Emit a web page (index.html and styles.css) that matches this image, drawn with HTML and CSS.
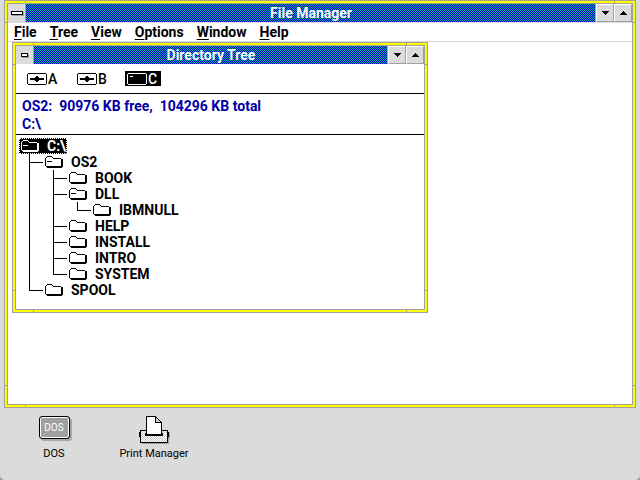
FILE: index.html
```html
<!DOCTYPE html>
<html lang="en">
<head>
<meta charset="utf-8">
<title>File Manager</title>
<link rel="stylesheet" href="styles.css">
</head>
<body>
<svg class="defs" aria-hidden="true">
  <symbol id="folder" viewBox="0 0 18 12">
    <path class="ink" d="M2 0h5v1H2zM1 1h1v1H1zM7 1h1v1H7zM0 2h1v8H0zM8 2h8v1H8zM16 3h2v8h-2zM1 10h16v2H2v-1H1z"/>
  </symbol>
  <symbol id="folder-open" viewBox="0 0 18 12">
    <use href="#folder"/>
    <path class="ink" d="M2 5h5v1H2z"/>
  </symbol>
  <symbol id="floppy" viewBox="0 0 20 12">
    <path class="ink" d="M1 0h18v1H1zM0 1h1v10H0zM19 1h1v10h-1zM1 11h18v1H1zM3 5h14v2H3zM8 4h4v4H8zM9 3h2v6H9z"/>
  </symbol>
  <symbol id="hard-disk" viewBox="0 0 20 12">
    <path class="ink" d="M1 0h18v1H1zM0 1h1v10H0zM19 1h1v10h-1zM1 11h18v1H1zM3 3h3v1H3z"/>
  </symbol>
  <symbol id="arrow-down" viewBox="0 0 7 4">
    <path class="ink" d="M0 0h7v1H0zM1 1h5v1H1zM2 2h3v1H2zM3 3h1v1H3z"/>
  </symbol>
  <symbol id="arrow-up" viewBox="0 0 7 4">
    <path class="ink" d="M3 0h1v1H3zM2 1h3v1H2zM1 2h5v1H1zM0 3h7v1H0z"/>
  </symbol>
</svg>

<main class="window main-window">
  <div class="pane">
    <header class="titlebar">
      <button class="system" aria-label="System menu"><span class="bar"></span></button>
      <h1 class="title">File Manager</h1>
      <button class="sizer" aria-label="Minimize"><svg class="arrow"><use href="#arrow-down"/></svg></button>
      <button class="sizer" aria-label="Maximize"><svg class="arrow"><use href="#arrow-up"/></svg></button>
    </header>
    <nav class="menubar">
      <button class="menu"><u>F</u>ile</button>
      <button class="menu"><u>T</u>ree</button>
      <button class="menu"><u>V</u>iew</button>
      <button class="menu"><u>O</u>ptions</button>
      <button class="menu"><u>W</u>indow</button>
      <button class="menu"><u>H</u>elp</button>
    </nav>
    <div class="workspace">
      <section class="window tree-window">
        <div class="pane">
          <header class="titlebar">
            <button class="system" aria-label="Document menu"><span class="bar short"></span></button>
            <h2 class="title">Directory Tree</h2>
            <button class="sizer" aria-label="Minimize"><svg class="arrow"><use href="#arrow-down"/></svg></button>
            <button class="sizer" aria-label="Maximize"><svg class="arrow"><use href="#arrow-up"/></svg></button>
          </header>
          <div class="drives">
            <button class="drive"><svg class="disk"><use href="#floppy"/></svg>A</button>
            <button class="drive"><svg class="disk"><use href="#floppy"/></svg>B</button>
            <button class="drive selected"><svg class="disk"><use href="#hard-disk"/></svg>C</button>
          </div>
          <div class="status">
            <p>OS2:&nbsp; 90976 KB free,&nbsp; 104296 KB total</p>
            <p>C:\</p>
          </div>
          <div class="tree">
            <button class="node root selected"><svg class="folder"><use href="#folder-open"/></svg>C:\</button>
            <ul class="branch top">
              <li>
                <button class="node"><svg class="folder"><use href="#folder-open"/></svg>OS2</button>
                <ul class="branch">
                  <li><button class="node"><svg class="folder"><use href="#folder"/></svg>BOOK</button></li>
                  <li>
                    <button class="node"><svg class="folder"><use href="#folder-open"/></svg>DLL</button>
                    <ul class="branch">
                      <li><button class="node"><svg class="folder"><use href="#folder"/></svg>IBMNULL</button></li>
                    </ul>
                  </li>
                  <li><button class="node"><svg class="folder"><use href="#folder"/></svg>HELP</button></li>
                  <li><button class="node"><svg class="folder"><use href="#folder"/></svg>INSTALL</button></li>
                  <li><button class="node"><svg class="folder"><use href="#folder"/></svg>INTRO</button></li>
                  <li><button class="node"><svg class="folder"><use href="#folder"/></svg>SYSTEM</button></li>
                </ul>
              </li>
              <li><button class="node"><svg class="folder"><use href="#folder"/></svg>SPOOL</button></li>
            </ul>
          </div>
        </div>
      </section>
    </div>
  </div>
</main>

<footer class="desktop">
  <button class="app">
    <span class="picture"><span class="dos">DOS</span></span>
    <span>DOS</span>
  </button>
  <button class="app">
    <span class="picture">
      <svg class="printer" viewBox="0 0 32 28" aria-hidden="true">
        <defs>
          <pattern id="dots" width="2" height="2" patternUnits="userSpaceOnUse">
            <path fill="#fff" d="M0 0h2v2H0z"/><path fill="#c8c8c8" d="M0 0h1v1H0zM1 1h1v1H1z"/>
          </pattern>
        </defs>
        <path fill="#a0a0a0" d="M4 16h28v7h-1v5H4z"/>
        <path fill="#000" d="M2 14h28v2h1v5h-1v6H2v-6H1v-5h1z"/>
        <path fill="url(#dots)" d="M3 15h26v11H3z"/>
        <path fill="#000" d="M7 17h18v3H7z"/>
        <path fill="#000" d="M8 0h10v1h1v1h1v1h1v1h1v1h1v1h1v13H8z"/>
        <path fill="#fff" d="M9 1h8v6h6v11H9z"/>
        <path fill="#d0d0d0" d="M18 2h1v1h1v1h1v1h1v1h-4z"/>
      </svg>
    </span>
    <span>Print Manager</span>
  </button>
</footer>
</body>
</html>
```
FILE: styles.css
```css
:root {
  --face: #dbdbdb;
  --edge: #a0a0a0;
  --frame: #ffff00;
  --navy: #0000a8;
  --dither: url("data:image/svg+xml,%3Csvg xmlns='http://www.w3.org/2000/svg' width='2' height='2' shape-rendering='crispEdges'%3E%3Cpath fill='%230000c0' d='M0 0h2v2H0z'/%3E%3Cpath fill='%2300a8a8' d='M0 0h1v1H0zM1 1h1v1H1z'/%3E%3C/svg%3E");
}

* {
  box-sizing: border-box;
}

html {
  background: #a0a0a0;
}

body {
  display: flex;
  flex-direction: column;
  min-height: 100vh;
  margin: 0;
  background: var(--face);
  border-radius: 0 0 5px 5px;
  color: #000;
  font: 700 14px/16px Roboto, "Liberation Sans", sans-serif;
}

h1, h2, p, ul {
  margin: 0;
  padding: 0;
  font: inherit;
}

ul {
  list-style: none;
}

button {
  margin: 0;
  padding: 0;
  border: 0;
  background: none;
  color: inherit;
  font: inherit;
}

svg {
  display: block;
  flex: none;
  shape-rendering: crispEdges;
}

.defs {
  position: absolute;
  width: 0;
  height: 0;
}

.ink {
  fill: currentColor;
}

/* Window frame: yellow sizing border with a notch near each corner */
.window {
  display: flex;
  padding: 2px;
  border: 1px solid var(--edge);
  background:
    linear-gradient(var(--edge), var(--edge)) left 20px top / 1px 100% no-repeat,
    linear-gradient(var(--edge), var(--edge)) right 20px top / 1px 100% no-repeat,
    linear-gradient(var(--edge), var(--edge)) left top 21px / 100% 1px no-repeat,
    linear-gradient(var(--edge), var(--edge)) left bottom 21px / 100% 1px no-repeat,
    var(--frame);
}

.pane {
  display: flex;
  flex: 1;
  flex-direction: column;
  min-width: 0;
  border: 1px solid var(--edge);
  background: #fff;
}

.main-window {
  flex: 1;
  margin: 0 4px;
}

.titlebar {
  display: flex;
  height: 18px;
  background: #0054b4 var(--dither);
  color: #fff;
}

.title {
  flex: 1;
  line-height: 18px;
  text-align: center;
}

.system {
  display: grid;
  place-items: center;
  width: 18px;
  border-right: 1px solid var(--edge);
  background: var(--face);
}

.bar {
  width: 12px;
  height: 4px;
  border: 1px solid #000;
  background: #fff;
  box-shadow: 1px 1px var(--edge);
}

.short {
  width: 7px;
}

.sizer {
  display: grid;
  place-items: center;
  width: 18px;
  border: 1px solid;
  border-color: #fff var(--edge) var(--edge) #fff;
  background: var(--face);
  box-shadow: -1px 0 var(--edge);
  color: #000;
}

.arrow {
  width: 7px;
  height: 4px;
}

.menubar {
  display: flex;
  gap: 13px;
  height: 20px;
  padding: 0 6px;
  border: solid var(--face);
  border-width: 1px 0;
}

.menu u {
  text-underline-offset: 2px;
  text-decoration-thickness: 1px;
}

.workspace {
  flex: 1;
  padding: 0 4px;
}

.tree-window {
  width: 416px;
  max-width: 100%;
}

.drives {
  display: flex;
  gap: 14px;
  height: 30px;
  padding: 7px 9px;
  border-bottom: 1px solid #000;
  font-weight: 500;
}

.drive {
  display: flex;
  gap: 1px;
  align-items: center;
  width: 36px;
  padding: 0 2px;
}

.disk {
  width: 20px;
  height: 12px;
}

.selected {
  background: #000;
  color: #fff;
}

.status {
  padding: 3px 6px 1px;
  border-bottom: 1px solid #000;
  color: var(--navy);
  line-height: 18px;
}

.tree {
  padding: 3px 3px 11px;
}

.node {
  display: flex;
  gap: 8px;
  align-items: center;
  height: 16px;
}

.folder {
  width: 18px;
  height: 12px;
}

.root {
  padding-left: 1px;
  border: 1px dotted #fff;
}

.branch {
  margin-left: 8px;
}

.top {
  margin-left: 10px;
}

/* Connector lines: a trunk down the left and a stub to each folder */
.branch > li {
  padding-left: 16px;
  background:
    linear-gradient(#000, #000) 0 0 / 1px 100% no-repeat,
    linear-gradient(#000, #000) 0 8px / 14px 1px no-repeat;
}

.branch > li:last-child {
  background:
    linear-gradient(#000, #000) 0 0 / 1px 8px no-repeat,
    linear-gradient(#000, #000) 0 8px / 14px 1px no-repeat;
}

.desktop {
  display: flex;
  height: 72px;
  padding: 8px 4px;
}

.app {
  display: flex;
  flex-direction: column;
  align-items: center;
  width: 100px;
  font-size: 11px;
  font-weight: 400;
}

.picture {
  height: 30px;
}

.printer {
  width: 32px;
  height: 28px;
}

.dos {
  display: block;
  width: 31px;
  height: 23px;
  border: 1px solid #000;
  border-radius: 3px;
  background: var(--edge);
  box-shadow: inset 0 0 0 1px #fff, 2px 2px #a8a8a8;
  color: #fff;
  font-size: 10px;
  line-height: 22px;
}
```
